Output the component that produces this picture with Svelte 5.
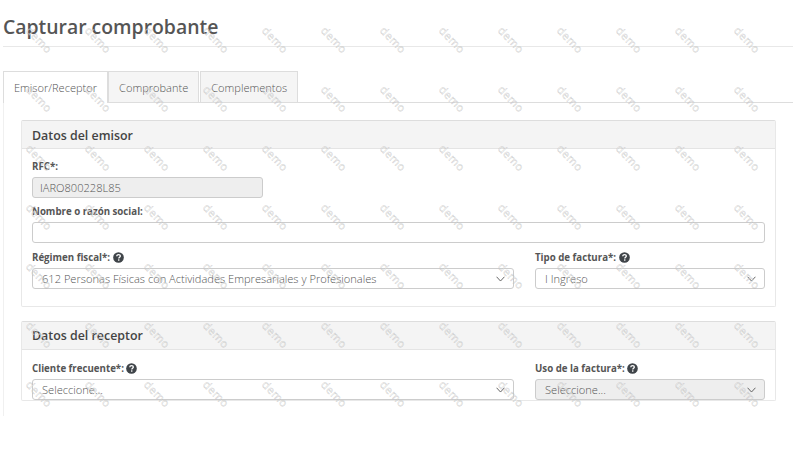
<script>
    const marks = Array.from({ length: 13 * 7 }, (_, i) => i);
</script>

{#snippet help()}
    <svg class="help" viewBox="0 0 12 12" aria-hidden="true">
        <circle cx="6" cy="6" r="5.8" fill="#3f4449" />
        <path d="M4.1 4.7c0-1.2.9-1.9 2-1.9s1.9.7 1.9 1.6c0 1.4-1.7 1.3-1.7 2.7" fill="none" stroke="#fff" stroke-width="1.4" />
        <rect x="5.5" y="8" width="1.5" height="1.5" fill="#fff" />
    </svg>
{/snippet}

{#snippet chevron()}
    <svg class="chevron" viewBox="0 0 8 5" aria-hidden="true">
        <path d="M.5.5L4 4.3 7.5.5" fill="none" stroke="#555" stroke-width="0.8" />
    </svg>
{/snippet}

<div class="page">
    <h1>Capturar comprobante</h1>

    <div class="tabs">
        <div class="tab active">Emisor/Receptor</div>
        <div class="tab">Comprobante</div>
        <div class="tab">Complementos</div>
    </div>

    <div class="tab-content">
        <section class="panel first">
            <h2>Datos del emisor</h2>
            <div class="panel-body">
                <span class="label">RFC*:</span>
                <div class="input rfc disabled">IARO800228L85</div>
                <span class="label name-label">Nombre o razón social:</span>
                <div class="input"></div>
                <div class="row regimen">
                    <div>
                        <span class="label">Régimen fiscal*: {@render help()}</span>
                        <div class="input select">612 Personas Físicas con Actividades Empresariales y Profesionales {@render chevron()}</div>
                    </div>
                    <div>
                        <span class="label">Tipo de factura*: {@render help()}</span>
                        <div class="input select">I Ingreso {@render chevron()}</div>
                    </div>
                </div>
            </div>
        </section>

        <section class="panel second">
            <h2>Datos del receptor</h2>
            <div class="panel-body">
                <div class="row">
                    <div>
                        <span class="label">Cliente frecuente*: {@render help()}</span>
                        <div class="input select">Seleccione... {@render chevron()}</div>
                    </div>
                    <div>
                        <span class="label">Uso de la factura*: {@render help()}</span>
                        <div class="input select disabled">Seleccione... {@render chevron()}</div>
                    </div>
                </div>
            </div>
        </section>
    </div>

    <div class="watermarks" aria-hidden="true">
        {#each marks as m (m)}
            <span>demo</span>
        {/each}
    </div>
</div>

<style>
    :global(body) {
        margin: 0;
        background: #fff;
    }

    .page {
        position: relative;
        width: 800px;
        height: 416px;
        overflow: hidden;
        padding: 0 7px 0 3px;
        box-sizing: border-box;
        font-family: "Open Sans", sans-serif;
        color: #555;
    }

    h1 {
        margin: 0;
        height: 47px;
        padding-top: 13px;
        box-sizing: border-box;
        font-size: 19.4px;
        line-height: 28px;
        font-weight: 600;
        color: #555;
        border-bottom: 1px solid #e8e8e8;
    }

    .tabs {
        display: flex;
        margin-top: 24px;
        height: 32px;
        box-sizing: border-box;
        border-bottom: 1px solid #ddd;
    }

    .tab {
        height: 31px;
        box-sizing: border-box;
        padding: 0 10px;
        margin-right: 1px;
        font-size: 11.05px;
        font-weight: 300;
        line-height: 31px;
        color: #555;
        background: #f5f5f5;
        border: 1px solid #ddd;
        border-bottom: 0;
    }

    .tab.active {
        height: 32px;
        background: #fff;
        margin-right: 0;
    }

    .tab-content {
        padding: 17px 17px 0;
        height: 320px;
        box-sizing: border-box;
        border-left: 1px solid #f0f0f0;
    }

    .panel {
        border: 1px solid #e8e8e8;
        border-top-color: #ddd;
        border-radius: 2px;
    }

    .panel.first {
        height: 187px;
        box-sizing: border-box;
        margin-bottom: 14px;
    }

    h2 {
        margin: 0;
        height: 28px;
        box-sizing: border-box;
        padding: 0 10px;
        font-size: 12.4px;
        line-height: 28px;
        font-weight: 600;
        color: #444;
        background: #f4f4f4;
        border-bottom: 1px solid #e4e4e4;
    }

    .panel.first h2 {
        padding-top: 1px;
        line-height: 27px;
    }

    .panel-body {
        padding: 9px 10px 0;
    }

    .second .panel-body {
        padding-top: 10px;
    }

    .label {
        display: flex;
        align-items: center;
        gap: 2.5px;
        height: 17px;
        margin-bottom: 2px;
        font-size: 9.7px;
        font-weight: 700;
        color: #555;
    }

    .name-label {
        margin-top: 5px;
    }

    .input {
        position: relative;
        height: 21px;
        box-sizing: border-box;
        padding: 0 9px;
        font-size: 11.1px;
        font-weight: 300;
        line-height: 20px;
        color: #555;
        background: #fff;
        border: 1px solid #ccc;
        border-radius: 3px;
    }

    .rfc {
        width: 231px;
        padding-left: 7px;
    }

    .disabled {
        background: #eee;
    }

    .row {
        display: grid;
        grid-template-columns: 482px 230px;
        gap: 21px;
    }

    .regimen {
        margin-top: 6px;
    }

    .help {
        width: 11px;
        height: 11px;
    }

    .chevron {
        position: absolute;
        right: 8px;
        top: 7px;
        width: 9px;
        height: 6px;
    }

    .watermarks {
        position: absolute;
        top: 10px;
        left: 10px;
        display: grid;
        grid-template-columns: repeat(13, 59px);
        grid-auto-rows: 59px;
        pointer-events: none;
    }

    .watermarks span {
        display: flex;
        align-items: center;
        justify-content: center;
        font-size: 11px;
        letter-spacing: 0.5px;
        color: rgba(255, 255, 255, 0.6);
        -webkit-text-stroke: 0.45px rgba(130, 130, 130, 0.38);
        transform: rotate(46deg);
    }
</style>
